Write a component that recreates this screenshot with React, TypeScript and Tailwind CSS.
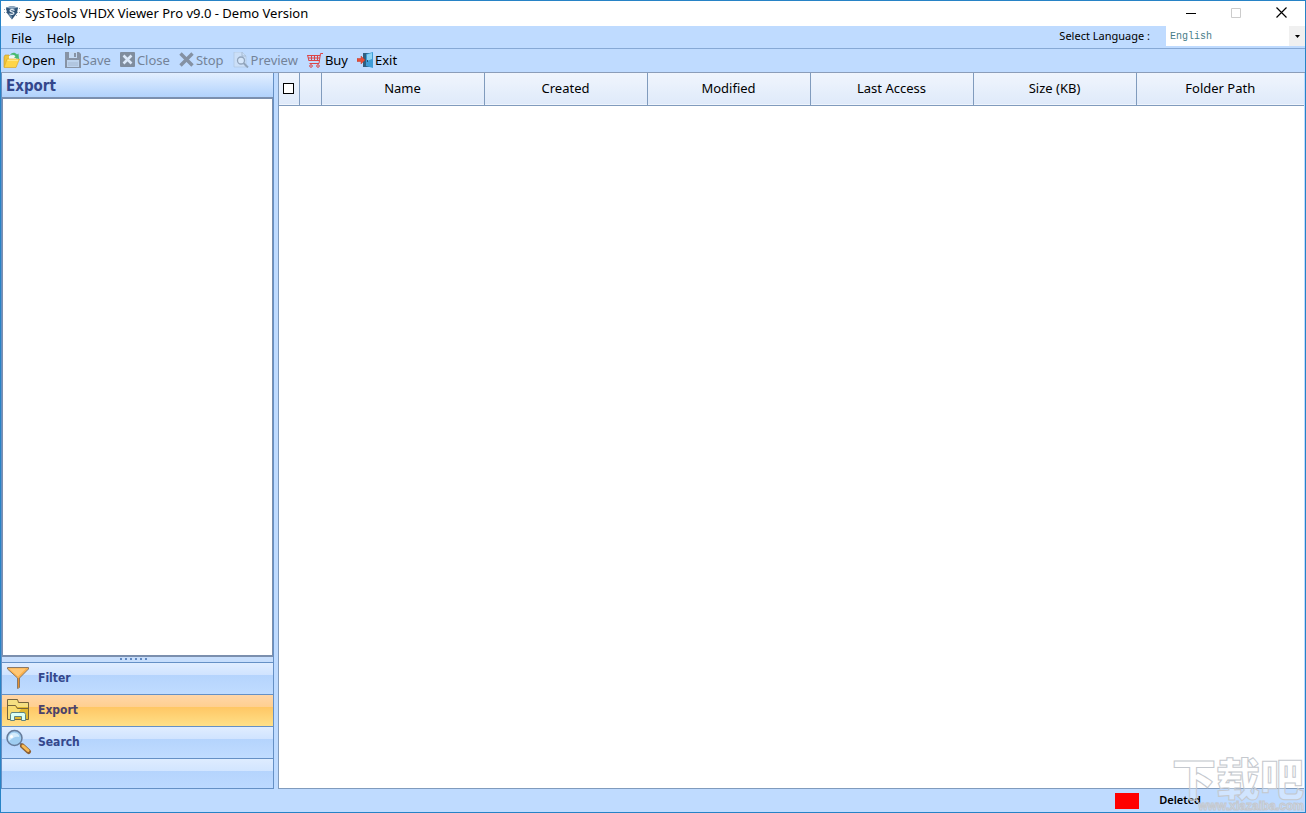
import { useState, type ReactNode } from "react";

type PanelKey = "filter" | "export" | "search";

function LogoIcon() {
  return (
    <svg width="16" height="16" viewBox="0 0 16 16" aria-hidden="true">
      <path d="M0 4.500h3M0 7.500h3M13 3.500h3M13 7.500h3M12 10.500h2" stroke="#8fa2b5" strokeDasharray="1 1" />
      <path d="M2 2.500L8 1l6 1.500L13 8l-5 6.500L3 8z" fill="#2f5377" />
      <path d="M2 2.500L8 1l6 1.500L8 4z" fill="#93abc2" />
      <path d="M3 8l5 6.500V11z" fill="#6788a7" />
      <path d="M10.500 5.500C9 4.300 6 4.500 6 5.800s4 .900 4 2.300-3 1.700-4.500.500" fill="none" stroke="#e8f1f8" strokeWidth="1.200" />
    </svg>
  );
}

function OpenIcon() {
  return (
    <svg width="17" height="18" viewBox="0 0 17 18" aria-hidden="true">
      <path d="M1 16V6l1-2h4l1 2h6v10z" fill="#f0c63c" stroke="#c99620" strokeWidth=".6" />
      <path d="M6 8V5l7-1v5z" fill="#f2f8ee" />
      <path d="M1 16.500L4 8h12.500L13 16.500z" fill="#fed548" stroke="#d6a52b" strokeWidth=".6" />
      <path d="M4.500 9.200h10.500" stroke="#fff0a3" />
      <path d="M7 4c2-3 5-3 7-.500l1.500-1L16 8l-5-1.500 1.500-1.200C11 3.500 9 3.500 7 4z" fill="#48ba70" />
    </svg>
  );
}

function SaveIcon() {
  return (
    <svg width="16" height="16" viewBox="0 0 16 16" aria-hidden="true">
      <path d="M0 0h14l2 2v14H0z" fill="#8793a5" />
      <path d="M4 0h8v6H4z" fill="#c3d9f4" />
      <path d="M9 1h2v4H9z" fill="#8793a5" />
      <path d="M2 8h12v7H2z" fill="#bdd3ed" />
      <path d="M3 11h10M3 13h10" stroke="#a5b8d1" />
    </svg>
  );
}

function CloseIcon() {
  return (
    <svg width="15" height="15" viewBox="0 0 15 15" aria-hidden="true">
      <rect width="15" height="15" rx="1" fill="#808d9e" />
      <path d="M3.500 3.500l8 8M11.500 3.500l-8 8" stroke="#dce9fa" strokeWidth="2.500" />
    </svg>
  );
}

function StopIcon() {
  return (
    <svg width="15" height="15" viewBox="0 0 15 15" aria-hidden="true">
      <path d="M1.500 1.500l12 12M13.500 1.500l-12 12" stroke="#8491a3" strokeWidth="3.400" />
    </svg>
  );
}

function PreviewIcon() {
  return (
    <svg width="16" height="16" viewBox="0 0 16 16" aria-hidden="true">
      <path d="M1 0h8l4 4v11H1z" fill="#cbdff8" stroke="#afc5df" strokeWidth=".7" />
      <path d="M9 0v4h4" fill="none" stroke="#a5bad3" />
      <circle cx="8" cy="8.500" r="3.500" fill="#d6e7fb" stroke="#91a4bb" strokeWidth="1.300" />
      <path d="M10.500 11l4.500 4.500" stroke="#91a4bb" strokeWidth="2" />
    </svg>
  );
}

function BuyIcon() {
  return (
    <svg width="16" height="16" viewBox="0 0 16 16" fill="none" stroke="#dc4547" aria-hidden="true">
      <path d="M16 1.500h-2.500L12 11.500H2.500M.500 3.500h12.800M1 6h12M2 8.500h10.500M.500 3l1.500 6M4.500 3.500v5M7.500 3.500v5M10.500 3.500v5" />
      <circle cx="4" cy="14" r="1.300" />
      <circle cx="11" cy="14" r="1.300" />
    </svg>
  );
}

function ExitIcon() {
  return (
    <svg width="16" height="16" viewBox="0 0 16 16" aria-hidden="true">
      <path d="M6 1h9v14H6z" fill="#315f80" />
      <path d="M9 2l7-2v16l-7-2z" fill="#3e9cd6" />
      <path d="M10 2.500l5-1.500v6l-5 2z" fill="#8dd3f4" />
      <path d="M10.500 8v2" stroke="#205778" />
      <path d="M0 6.500h4V4l4 4-4 4V9.500H0z" fill="#e84d36" stroke="#b93c30" strokeWidth=".5" />
    </svg>
  );
}

function FilterIcon() {
  return (
    <svg width="24" height="24" viewBox="0 0 24 24" aria-hidden="true">
      <path d="M1.500 1.500h21V3L13.500 12v9.500l-2 1V12L1.500 3z" fill="#fbb04c" stroke="#8a7968" />
      <path d="M3 2.500h17l-8 8z" fill="#ffc775" />
      <path d="M12.500 12v9" stroke="#e68f30" />
    </svg>
  );
}

function ExportIcon() {
  return (
    <svg width="24" height="24" viewBox="0 0 24 24" strokeWidth="1" aria-hidden="true">
      <path d="M1.500 21.500v-20h10l1 3h10v17z" fill="#e2b730" stroke="#75643d" />
      <path d="M2 2h9l1 3h10v4H11L9 7H2z" fill="#f5df82" />
      <path d="M1.500 7.500h8l2 3h11" fill="none" stroke="#75643d" />
      <path d="M2 8h7l2 3h4L8 21H2z" fill="#f8dc72" />
      <path d="M4.500 22.500v-6l1-2h13l1 2v6h-4v-4h-7v4z" fill="#d9fff5" stroke="#608481" />
    </svg>
  );
}

function SearchIcon() {
  return (
    <svg width="26" height="26" viewBox="0 0 26 26" aria-hidden="true">
      <path d="M14 14l3 3" stroke="#68778c" strokeWidth="2" />
      <path d="M16.500 17l6 5.500" stroke="#8d6033" strokeWidth="5" strokeLinecap="round" />
      <path d="M17 17l5 4.500" stroke="#f8bb55" strokeWidth="3" strokeLinecap="round" />
      <circle cx="8.500" cy="9" r="7.500" fill="#9fcdf1" stroke="#657b9b" strokeWidth="1.500" />
      <path d="M3 12c-2-5 2-9 6-8 3 0 5 3 4 4-4-1-6 1-10 4z" fill="#d3ebfc" />
      <circle cx="5.500" cy="7.500" r="1.500" fill="#fff" />
    </svg>
  );
}

const TOOLS: { label: string; icon: ReactNode; disabled?: boolean }[] = [
  { label: "Open", icon: <OpenIcon /> },
  { label: "Save", icon: <SaveIcon />, disabled: true },
  { label: "Close", icon: <CloseIcon />, disabled: true },
  { label: "Stop", icon: <StopIcon />, disabled: true },
  { label: "Preview", icon: <PreviewIcon />, disabled: true },
  { label: "Buy", icon: <BuyIcon /> },
  { label: "Exit", icon: <ExitIcon /> },
];

const PANELS: { key: PanelKey; label: string; icon: ReactNode }[] = [
  { key: "filter", label: "Filter", icon: <FilterIcon /> },
  { key: "export", label: "Export", icon: <ExportIcon /> },
  { key: "search", label: "Search", icon: <SearchIcon /> },
];

const COLUMNS = ["Name", "Created", "Modified", "Last Access", "Size (KB)", "Folder Path"];

function TitleBar() {
  return (
    <header className="flex h-[25px] shrink-0 items-center bg-white pr-px pb-[2px] pl-[3px]">
      <LogoIcon />
      <h1 className="ml-[5px] flex-1 text-[13px] leading-4">SysTools VHDX Viewer Pro v9.0 - Demo Version</h1>
      <button aria-label="Minimize" className="flex h-full w-[45px] items-center justify-center">
        <svg width="10" height="10" viewBox="0 0 10 10" stroke="#000"><path d="M0 5.500h10" /></svg>
      </button>
      <button aria-label="Maximize" disabled className="flex h-full w-[45px] items-center justify-center">
        <svg width="10" height="10" viewBox="0 0 10 10" fill="none" stroke="#ccc"><path d="M.500 .500h9v9h-9z" /></svg>
      </button>
      <button aria-label="Close window" className="flex h-full w-[46px] items-center justify-center">
        <svg width="11" height="11" viewBox="0 0 11 11" stroke="#000" strokeWidth="1.200"><path d="M.500 .500l10 10M10.500 .500l-10 10" /></svg>
      </button>
    </header>
  );
}

function MenuBar() {
  const [language, setLanguage] = useState("English");

  return (
    <div className="flex h-[22px] shrink-0 items-start justify-between bg-[#bfdbff]">
      <nav className="flex gap-[15px] pt-1 pl-[10px] text-[13px] leading-4">
        <button>File</button>
        <button>Help</button>
      </nav>
      <div className="flex items-center">
        <label htmlFor="language" className="mr-4 text-[11px] leading-5">Select Language :</label>
        <div className="relative">
          <select
            id="language"
            value={language}
            onChange={(e) => setLanguage(e.target.value)}
            className="block h-5 w-[139px] appearance-none rounded-none bg-white pl-1 font-['Liberation_Mono',monospace] text-[10px] text-[#477d88]"
          >
            <option>English</option>
          </select>
          <span className="pointer-events-none absolute inset-y-0 right-0 flex w-4 items-center justify-center bg-[#f0f0f0]">
            <svg width="5" height="3" viewBox="0 0 5 3"><path d="M0 0h5L2.500 3z" /></svg>
          </span>
        </div>
      </div>
    </div>
  );
}

function Toolbar() {
  return (
    <div className="flex h-[25px] shrink-0 items-center gap-[9px] border-t border-b border-t-[#87a9d5] border-b-[#8b9db9] bg-[#bfdbff] pb-[2px] pl-[2px]">
      {TOOLS.map(({ label, icon, disabled }) => (
        <button
          key={label}
          disabled={disabled}
          className="flex items-center gap-[2px] text-[13px] leading-4 disabled:text-[#748398]"
        >
          {icon}
          {label}
        </button>
      ))}
    </div>
  );
}

function Sidebar() {
  const [active, setActive] = useState<PanelKey>("export");
  const title = PANELS.find((p) => p.key === active)?.label;

  return (
    <aside className="flex w-[273px] shrink-0 flex-col border-r border-b border-l border-[#6590c5] font-['DejaVu_Sans_Condensed','DejaVu_Sans',sans-serif] font-bold text-[#34478c]">
      <h2 className="h-6 shrink-0 bg-linear-to-b from-[#e3efff] to-[#b1d2fc] pt-px pl-1 text-[15px] leading-6">{title}</h2>
      <div className="flex-1 border border-t-2 border-b-2 border-[#7b8fae] bg-white" />
      <div className="flex h-[5px] shrink-0 items-center justify-center gap-[3px] bg-[#c7defc] pr-2 pb-px">
        {[0, 1, 2, 3, 4, 5].map((dot) => (
          <span key={dot} className="size-[2px] bg-[#6089c2]" />
        ))}
      </div>
      {PANELS.map(({ key, label, icon }) => (
        <button
          key={key}
          aria-pressed={key === active}
          onClick={() => setActive(key)}
          className="flex h-8 shrink-0 items-center border-t border-[#6590c5] bg-[linear-gradient(#e0edff,#cfe3ff_40%,#b5d4fd_40%,#c0dcff)] pb-[2px] pl-1 text-left text-[12px] aria-pressed:bg-[linear-gradient(#ffd6a8,#ffcf8f_40%,#ffc765_40%,#ffe088)] aria-pressed:text-[#4b426c]"
        >
          <span className="flex w-8 shrink-0">{icon}</span>
          {label}
        </button>
      ))}
      <div className="h-[30px] shrink-0 border-t border-[#6590c5] bg-[linear-gradient(#deecff,#d2e5ff_40%,#b5d4fd_40%,#bcd9ff)]" />
    </aside>
  );
}

function FileList() {
  return (
    <main className="mr-px ml-1 min-w-0 flex-1 border-b border-l border-[#809bbd] bg-white">
      <table className="w-full table-fixed border-collapse">
        <thead>
          <tr className="h-8 border-b border-[#809bbd] bg-linear-to-b from-[#f0f5fd] to-[#dfeafa] text-[13px]">
            <th className="w-[20px] border-r border-[#809bbd] p-0">
              <input
                type="checkbox"
                aria-label="Select all"
                className="mx-auto block size-[11px] appearance-none border border-black bg-white checked:bg-black"
              />
            </th>
            <th className="w-[22px] border-r border-[#809bbd] p-0" />
            {COLUMNS.map((column) => (
              <th key={column} className="w-[163px] border-r border-[#809bbd] p-0 font-normal last:w-auto last:border-r-0">
                {column}
              </th>
            ))}
          </tr>
        </thead>
      </table>
    </main>
  );
}

function Watermark() {
  return (
    <div className="pointer-events-none absolute right-px bottom-0 flex flex-col items-end font-['Noto_Sans_CJK_SC',sans-serif] font-black text-white/30 [-webkit-text-stroke:1px_#c4c8ce]">
      <span className="text-[44px] leading-[46px]">下载吧</span>
      <span className="font-['Liberation_Sans',sans-serif] text-[12px] leading-3">www.xiazaiba.com</span>
    </div>
  );
}

export default function App() {
  return (
    <div className="relative flex h-screen flex-col overflow-hidden border border-[#2783c6] bg-[#bfdbff] font-['Noto_Sans',sans-serif] text-black">
      <TitleBar />
      <MenuBar />
      <Toolbar />
      <div className="flex min-h-0 flex-1">
        <Sidebar />
        <FileList />
      </div>
      <footer className="flex h-[23px] shrink-0 items-center justify-end gap-5 pr-[104px] text-[11px] font-semibold">
        <span className="h-4 w-6 bg-[red]" />
        Deleted
      </footer>
      <Watermark />
    </div>
  );
}
